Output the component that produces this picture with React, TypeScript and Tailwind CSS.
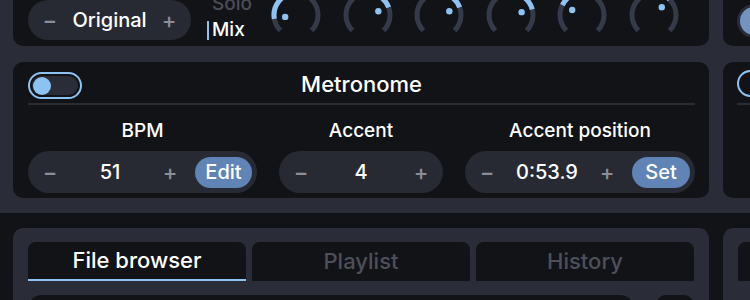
import React from "react";

const knobValues = [-100, 70, 70, 75, -63, 45];

function polar(angle: number, r: number) {
  const rad = (angle * Math.PI) / 180;
  return [30 + r * Math.sin(rad), 30 - r * Math.cos(rad)];
}

function arcPath(from: number, to: number, r: number) {
  const [x0, y0] = polar(from, r);
  const [x1, y1] = polar(to, r);
  const large = to - from > 180 ? 1 : 0;
  return `M ${x0} ${y0} A ${r} ${r} 0 ${large} 1 ${x1} ${y1}`;
}

function Knob({ value }: { value: number }) {
  const [dx, dy] = polar(value, 11);
  return (
    <svg width="60" height="60" viewBox="0 0 60 60" className="shrink-0">
      <path d={arcPath(-135, 135, 22)} fill="none" stroke="#343a48" strokeWidth="5" />
      <path
        d={arcPath(Math.min(0, value), Math.max(0, value), 22)}
        fill="none"
        stroke="#8cc3f3"
        strokeWidth="5"
      />
      <circle cx={dx} cy={dy} r="3.2" fill="#8cc3f3" />
    </svg>
  );
}

function Stepper({ value, action, actionWidth }: { value: string; action?: string; actionWidth?: string }) {
  return (
    <div className="flex h-[42px] items-center rounded-full bg-[#272a33] px-[2px] text-[20px]">
      <span className="w-10 text-center text-[22px] text-[#8b8e97]">−</span>
      <span className="w-20 text-center text-white">{value}</span>
      <span className="w-10 text-center text-[22px] text-[#8b8e97]">+</span>
      {action ? (
        <button
          type="button"
          className={`ml-[5px] mr-[3px] h-[31px] rounded-full bg-[#5f84b5] text-white ${actionWidth}`}
        >
          {action}
        </button>
      ) : null}
    </div>
  );
}

function Toggle() {
  return (
    <div className="flex h-[27px] w-[54px] items-center rounded-full border-2 border-[#8cc3f3] bg-[#121317] p-[2px]">
      <div className="flex h-full w-full items-center rounded-full bg-[#2a2d38] pl-[1px]">
        <div className="h-[18px] w-[18px] rounded-full bg-[#8cc3f3]" />
      </div>
    </div>
  );
}

const tabs = ["File browser", "Playlist", "History"];

export default function App() {
  return (
    <div className="h-[300px] w-[750px] overflow-hidden bg-[#121317] font-['Inter','Noto_Sans',sans-serif] font-medium">
      <div className="flex gap-[14px] bg-[#2a2c37] pb-[15px] pl-[13px]">
        <div className="flex w-[696px] shrink-0 flex-col gap-[16px]">
          <div className="-mt-[14px] flex h-[60px] items-start rounded-[10px] bg-[#121317] pl-[15px] pt-[14px]">
            <div className="flex h-[40px] w-[163px] items-center rounded-full bg-[#272a33] px-[2px] text-[20px]">
              <span className="w-10 text-center text-[22px] text-[#8b8e97]">−</span>
              <span className="w-20 text-center text-white">Original</span>
              <span className="w-10 text-center text-[22px] text-[#8b8e97]">+</span>
            </div>
            <div className="-mt-[9px] ml-[16px] flex w-[43px] flex-col text-[19px]">
              <div className="flex h-[26px] items-center pl-[5px] text-[#4b4d56]">Solo</div>
              <div className="flex h-[26px] items-center text-white">
                <span className="mr-[3px] h-[19px] w-[2px] bg-[#8cc3f3]" />
                Mix
              </div>
            </div>
            <div className="-mt-[15px] ml-[16px] flex gap-[11.5px]">
              {knobValues.map((v, i) => (
                <Knob key={i} value={v} />
              ))}
            </div>
          </div>

          <div className="flex h-[136px] flex-col rounded-[10px] bg-[#121317] pl-[15px] pr-[14px] pt-[8px]">
            <div className="grid h-[27px] grid-cols-[1fr_auto_1fr] items-center">
              <Toggle />
              <div className="-mt-[2px] text-[22px] text-white">Metronome</div>
              <div />
            </div>
            <div className="mt-[6px] h-[2px] bg-[#2a2c35]" />
            <div className="mt-[14px] flex gap-[22px] text-[19px] text-white">
              <div className="flex flex-col items-center gap-[8px]">
                <div className="h-[24px] leading-[24px]">BPM</div>
                <Stepper value="51" action="Edit" actionWidth="w-[57px]" />
              </div>
              <div className="flex flex-col items-center gap-[8px]">
                <div className="h-[24px] leading-[24px]">Accent</div>
                <Stepper value="4" />
              </div>
              <div className="flex flex-col items-center gap-[8px]">
                <div className="h-[24px] leading-[24px]">Accent position</div>
                <Stepper value="0:53.9" action="Set" actionWidth="w-[58px]" />
              </div>
            </div>
          </div>
        </div>

        <div className="flex flex-1 flex-col gap-[16px]">
          <div className="-mt-[14px] flex h-[60px] items-start rounded-l-[10px] bg-[#121317] pl-[14px] pt-[18px]">
            <div className="h-[34px] w-[34px] shrink-0 rounded-full border-[3px] border-[#2a2d38] bg-[#7393c0]" />
          </div>
          <div className="flex h-[136px] flex-col rounded-l-[10px] bg-[#121317] pl-[14px] pt-[8px]">
            <div className="h-[27px] w-[54px] shrink-0 rounded-full border-2 border-[#8cc3f3] bg-[#121317]" />
            <div className="mt-[6px] h-[2px] bg-[#2a2c35]" />
          </div>
        </div>
      </div>

      <div className="flex gap-[14px] pl-[13px] pt-[15px]">
        <div className="w-[696px] shrink-0 rounded-[10px] bg-[#2a2c37] pl-[15px] pr-[15px] pt-[14px]">
          <div className="flex gap-[6px] text-[22px]">
            {tabs.map((tab, i) => (
              <div
                key={tab}
                className={`flex h-[39px] flex-1 items-center justify-center rounded-t-[8px] bg-[#121317] ${
                  i === 0 ? "border-b-2 border-[#8cc3f3] text-white" : "text-[#4d5059]"
                }`}
              >
                {tab}
              </div>
            ))}
          </div>
          <div className="mt-[14px] flex gap-[22px]">
            <div className="h-[30px] flex-1 rounded-[14px] bg-[#121317]" />
            <div className="h-[30px] w-[38px] rounded-[10px] bg-[#121317]" />
          </div>
        </div>
        <div className="flex-1 rounded-l-[10px] bg-[#2a2c37] pl-[15px] pt-[14px]">
          <div className="h-[39px] rounded-tl-[8px] bg-[#121317]" />
        </div>
      </div>
    </div>
  );
}
